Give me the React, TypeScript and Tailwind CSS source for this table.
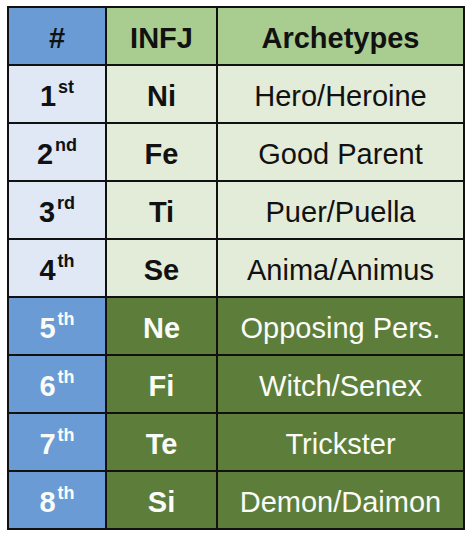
import React from "react";

type Row = { n: string; sup: string; f: string; a: string; dark: boolean };

const rows: Row[] = [
  { n: "1", sup: "st", f: "Ni", a: "Hero/Heroine", dark: false },
  { n: "2", sup: "nd", f: "Fe", a: "Good Parent", dark: false },
  { n: "3", sup: "rd", f: "Ti", a: "Puer/Puella", dark: false },
  { n: "4", sup: "th", f: "Se", a: "Anima/Animus", dark: false },
  { n: "5", sup: "th", f: "Ne", a: "Opposing Pers.", dark: true },
  { n: "6", sup: "th", f: "Fi", a: "Witch/Senex", dark: true },
  { n: "7", sup: "th", f: "Te", a: "Trickster", dark: true },
  { n: "8", sup: "th", f: "Si", a: "Demon/Daimon", dark: true },
];

export default function App() {
  return (
    <div className="w-[474px] h-[541px] bg-white pl-[7px] pt-[6px] font-['Liberation_Sans',Arial,sans-serif]">
      <div className="w-[458px] bg-[#111] p-[2px] grid grid-cols-[96px_109px_245px] auto-rows-[56px] gap-[2px]">
        <div className="bg-[#6a9bd4] flex items-center justify-center pt-[6px] text-[29px] font-bold text-[#111]">#</div>
        <div className="bg-[#a9cc90] flex items-center justify-center pt-[6px] text-[29px] font-bold text-[#111]">INFJ</div>
        <div className="bg-[#a9cc90] flex items-center justify-center pt-[6px] text-[29px] font-bold text-[#111]">Archetypes</div>
        {rows.map((r) => (
          <React.Fragment key={r.n}>
            <div
              className={
                r.dark
                  ? "bg-[#6a9bd4] text-[#fbfbf8] flex items-center justify-center pt-[6px] font-bold"
                  : "bg-[#dfe8f4] text-[#111] flex items-center justify-center pt-[6px] font-bold"
              }
            >
              <span className="text-[29px]">
                {r.n}
                <span className="relative -top-[13px] ml-[2px] text-[18px]">{r.sup}</span>
              </span>
            </div>
            <div
              className={
                r.dark
                  ? "bg-[#5d7e3b] text-[#fbfbf8] flex items-center justify-center pt-[6px] text-[29px] font-bold"
                  : "bg-[#e3ebd9] text-[#111] flex items-center justify-center pt-[6px] text-[29px] font-bold"
              }
            >
              {r.f}
            </div>
            <div
              className={
                r.dark
                  ? "bg-[#5d7e3b] text-[#fbfbf8] flex items-center justify-center pt-[6px] text-[29px]"
                  : "bg-[#e3ebd9] text-[#111] flex items-center justify-center pt-[6px] text-[29px]"
              }
            >
              {r.a}
            </div>
          </React.Fragment>
        ))}
      </div>
    </div>
  );
}
